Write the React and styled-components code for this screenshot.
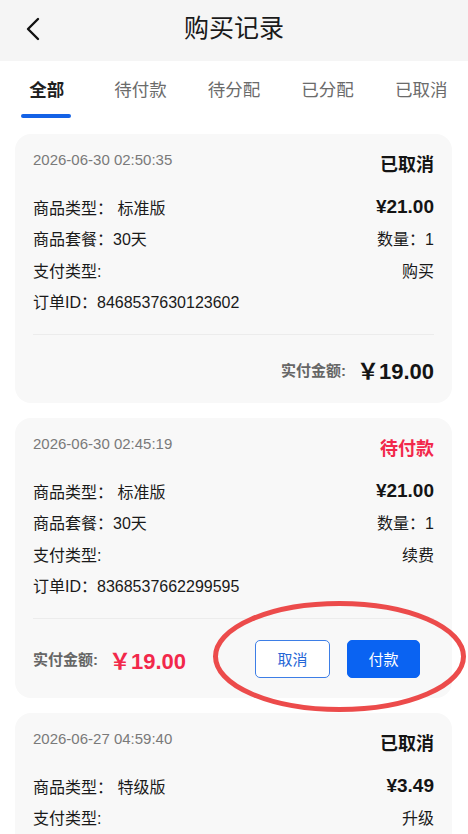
import React from "react";
import styled, { createGlobalStyle } from "styled-components";

const GlobalStyle = createGlobalStyle`
    * {
        box-sizing: border-box;
    }
    body {
        margin: 0;
        background: #ffffff;
        font-family: "Liberation Sans", "Noto Sans CJK SC", sans-serif;
        color: #1a1a1a;
        overflow: hidden;
    }
`;

const Page = styled.div`
    position: relative;
    width: 100%;
    min-height: 100vh;
    background: #ffffff;
`;

const NavBar = styled.div`
    height: 61px;
    background: #f5f5f5;
    display: grid;
    grid-template-columns: 70px 1fr 70px;
    align-items: start;
`;

const BackButton = styled.div`
    padding: 17px 0 0 24px;
    display: flex;
`;

const Title = styled.div`
    text-align: center;
    font-size: 25px;
    line-height: 56px;
    color: #1a1a1a;
`;

const Tabs = styled.div`
    height: 59px;
    display: grid;
    grid-template-columns: repeat(5, 1fr);
    background: #ffffff;
`;

const Tab = styled.div`
    display: flex;
    flex-direction: column;
    align-items: center;
    padding-top: 18px;
    font-size: 17.5px;
    line-height: 22px;
    color: ${(p) => (p.$active ? "#1f1f1f" : "#6b6b6b")};
    font-weight: ${(p) => (p.$active ? 700 : 400)};
`;

const TabLine = styled.div`
    width: 50px;
    height: 4px;
    margin-top: 13px;
    border-radius: 2px;
    background: ${(p) => (p.$active ? "#1462e6" : "transparent")};
    margin-left: -1px;
`;

const List = styled.div`
    display: flex;
    flex-direction: column;
    gap: 15px;
    padding: 14px 16px 0 15px;
`;

const Card = styled.div`
    background: #f8f8f8;
    border-radius: 16px;
    padding: 16px 18px 0;
`;

const CardHead = styled.div`
    display: flex;
    justify-content: space-between;
    align-items: flex-start;
    margin-bottom: 14px;
`;

const DateText = styled.div`
    font-size: 15px;
    line-height: 20px;
    color: #7a7a7a;
`;

const Status = styled.div`
    margin-top: 3px;
    font-size: 18px;
    line-height: 24px;
    font-weight: 700;
    color: ${(p) => (p.$pending ? "#f2284b" : "#141414")};
`;

const Row = styled.div`
    display: flex;
    justify-content: space-between;
    align-items: center;
    height: 31.5px;
    font-size: 16px;
    color: #1a1a1a;
`;

const Price = styled.span`
    font-size: 19px;
    font-weight: 700;
    color: #141414;
`;

const Divider = styled.div`
    height: 1px;
    background: #ececec;
    margin-top: 17px;
`;

const Footer = styled.div`
    display: flex;
    align-items: center;
    justify-content: ${(p) => (p.$actions ? "space-between" : "flex-end")};
    height: ${(p) => (p.$actions ? "79px" : "68px")};
`;

const Total = styled.div`
    display: flex;
    align-items: center;
`;

const TotalLabel = styled.span`
    font-size: 15px;
    font-weight: 700;
    color: #666666;
    margin-right: 11px;
`;

const TotalValue = styled.span`
    font-size: 22px;
    font-weight: 700;
    color: ${(p) => (p.$pending ? "#f2284b" : "#141414")};
`;

const Actions = styled.div`
    display: flex;
    gap: 17px;
    margin-right: 14px;
`;

const Button = styled.button`
    width: ${(p) => (p.$primary ? "73px" : "75px")};
    height: 38px;
    border-radius: 5px;
    font-family: inherit;
    font-size: 15px;
    border: 1px solid ${(p) => (p.$primary ? "#0a63f2" : "#3d7ee6")};
    background: ${(p) => (p.$primary ? "#0a63f2" : "#ffffff")};
    color: ${(p) => (p.$primary ? "#ffffff" : "#2566d6")};
    padding: 0;
`;

const Annotation = styled.svg`
    position: absolute;
    left: 0;
    top: 0;
    pointer-events: none;
`;

const tabs = ["全部", "待付款", "待分配", "已分配", "已取消"];

const orders = [
    {
        id: "8468537630123602",
        date: "2026-06-30 02:50:35",
        status: "已取消",
        type: "标准版",
        plan: "30天",
        price: "¥21.00",
        qty: 1,
        pay: "购买",
        total: "￥19.00",
    },
    {
        id: "8368537662299595",
        date: "2026-06-30 02:45:19",
        status: "待付款",
        pending: true,
        type: "标准版",
        plan: "30天",
        price: "¥21.00",
        qty: 1,
        pay: "续费",
        total: "￥19.00",
    },
    {
        id: "8268537600011275",
        date: "2026-06-27 04:59:40",
        status: "已取消",
        type: "特级版",
        price: "¥3.49",
        pay: "升级",
        total: "￥3.49",
    },
];

const BackIcon = () => (
    <svg width="18" height="24" viewBox="0 0 18 24">
        <path d="M14 2 L4 12 L14 22" fill="none" stroke="#111" strokeWidth="2.4" strokeLinecap="round" strokeLinejoin="round" />
    </svg>
);

const OrderCard = ({ order }) => (
    <Card>
        <CardHead>
            <DateText>{order.date}</DateText>
            <Status $pending={order.pending}>{order.status}</Status>
        </CardHead>
        <Row>
            <span>商品类型： {order.type}</span>
            <Price>{order.price}</Price>
        </Row>
        {order.plan && (
            <Row>
                <span>商品套餐：{order.plan}</span>
                <span>数量：{order.qty}</span>
            </Row>
        )}
        <Row>
            <span>支付类型:</span>
            <span>{order.pay}</span>
        </Row>
        <Row>
            <span>订单ID：{order.id}</span>
        </Row>
        <Divider />
        <Footer $actions={order.pending}>
            <Total>
                <TotalLabel>实付金额:</TotalLabel>
                <TotalValue $pending={order.pending}>{order.total}</TotalValue>
            </Total>
            {order.pending && (
                <Actions>
                    <Button>取消</Button>
                    <Button $primary>付款</Button>
                </Actions>
            )}
        </Footer>
    </Card>
);

const App = () => {
    return (
        <>
            <GlobalStyle />
            <Page>
                <NavBar>
                    <BackButton>
                        <BackIcon />
                    </BackButton>
                    <Title>购买记录</Title>
                    <div />
                </NavBar>
                <Tabs>
                    {tabs.map((t, i) => (
                        <Tab key={t} $active={i === 0}>
                            {t}
                            <TabLine $active={i === 0} />
                        </Tab>
                    ))}
                </Tabs>
                <List>
                    {orders.map((o) => (
                        <OrderCard key={o.id} order={o} />
                    ))}
                </List>
                {/* red marker drawn over the pay buttons */}
                <Annotation width="468" height="834" viewBox="0 0 468 834">
                    <ellipse cx="339.5" cy="656.5" rx="124" ry="53" fill="none" stroke="#ec4b4b" strokeWidth="5" />
                </Annotation>
            </Page>
        </>
    );
};

export default App;
